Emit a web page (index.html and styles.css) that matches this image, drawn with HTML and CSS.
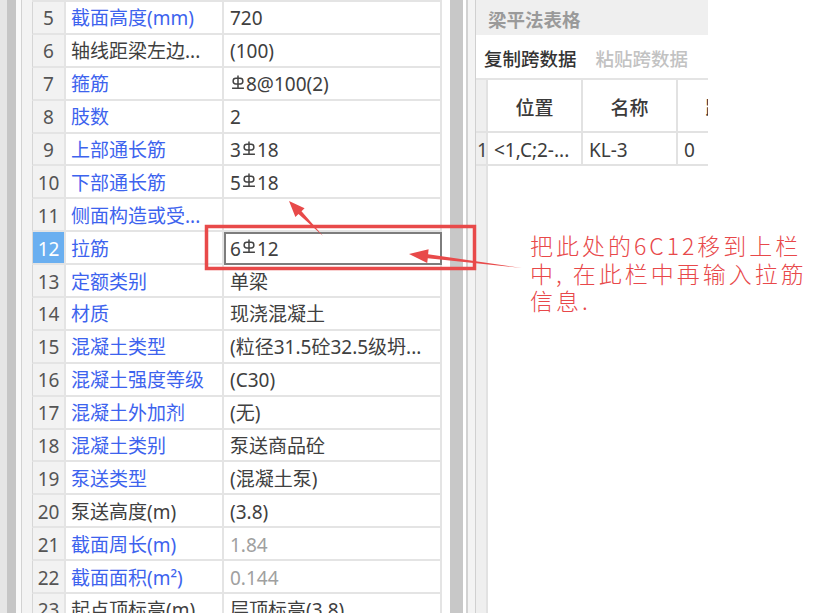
FILE: index.html
```html
<!DOCTYPE html>
<html lang="zh-CN">
<head>
<meta charset="utf-8">
<title>梁属性</title>
<link rel="stylesheet" href="styles.css">
</head>
<body>
<div class="screen">
  <div class="edge-left">
    <div class="e1"></div><div class="e2"></div><div class="e3"></div><div class="e4"></div><div class="e5"></div>
  </div>

  <div class="props">
    <div class="num">5</div><div class="name link">截面高度(mm)</div><div class="val">720</div>
    <div class="num">6</div><div class="name">轴线距梁左边...</div><div class="val">(100)</div>
    <div class="num">7</div><div class="name link">箍筋</div><div class="val"><svg class="rebar" viewBox="0 0 13 13"><path d="M6.5 0.5V12M1 12.2H12"/><rect x="2" y="3" width="9" height="5.4" rx="2.5"/></svg>8@100(2)</div>
    <div class="num">8</div><div class="name link">肢数</div><div class="val">2</div>
    <div class="num">9</div><div class="name link">上部通长筋</div><div class="val">3<svg class="rebar" viewBox="0 0 13 13"><path d="M6.5 0.5V12M1 12.2H12"/><rect x="2" y="3" width="9" height="5.4" rx="2.5"/></svg>18</div>
    <div class="num">10</div><div class="name link">下部通长筋</div><div class="val">5<svg class="rebar" viewBox="0 0 13 13"><path d="M6.5 0.5V12M1 12.2H12"/><rect x="2" y="3" width="9" height="5.4" rx="2.5"/></svg>18</div>
    <div class="num">11</div><div class="name link">侧面构造或受...</div><div class="val"></div>
    <div class="num sel">12</div><div class="name link">拉筋</div><div class="val edit">6<svg class="rebar" viewBox="0 0 13 13"><path d="M6.5 0.5V12M1 12.2H12"/><rect x="2" y="3" width="9" height="5.4" rx="2.5"/></svg>12</div>
    <div class="num">13</div><div class="name link">定额类别</div><div class="val">单梁</div>
    <div class="num">14</div><div class="name link">材质</div><div class="val">现浇混凝土</div>
    <div class="num">15</div><div class="name link">混凝土类型</div><div class="val">(粒径31.5砼32.5级坍...</div>
    <div class="num">16</div><div class="name link">混凝土强度等级</div><div class="val">(C30)</div>
    <div class="num">17</div><div class="name link">混凝土外加剂</div><div class="val">(无)</div>
    <div class="num">18</div><div class="name link">混凝土类别</div><div class="val">泵送商品砼</div>
    <div class="num">19</div><div class="name link">泵送类型</div><div class="val">(混凝土泵)</div>
    <div class="num">20</div><div class="name">泵送高度(m)</div><div class="val">(3.8)</div>
    <div class="num">21</div><div class="name link">截面周长(m)</div><div class="val muted">1.84</div>
    <div class="num">22</div><div class="name link">截面面积(m²)</div><div class="val muted">0.144</div>
    <div class="num">23</div><div class="name">起点顶标高(m)</div><div class="val">层顶标高(3.8)</div>
  </div>

  <div class="gap-a"></div>
  <div class="scrollbar"></div>
  <div class="gap-b"></div>
  <div class="divider"></div>
  <div class="gap-c"></div>

  <div class="panel">
    <div class="panel-title">梁平法表格</div>
    <div class="toolbar">
      <span class="tool">复制跨数据</span>
      <span class="tool disabled">粘贴跨数据</span>
    </div>
    <div class="grid">
      <div class="rh head"></div><div class="gh">位置</div><div class="gh">名称</div><div class="gh">跨长</div>
      <div class="rh">1</div><div class="gc">&lt;1,C;2-...</div><div class="gc">KL-3</div><div class="gc">0</div>
      <div class="rh fill"></div><div class="blank"></div>
    </div>
  </div>

  <div class="rest"></div>
</div>

<svg class="annot" viewBox="0 0 815 613" width="815" height="613">
  <rect x="206.5" y="226.5" width="268" height="42" class="mark"/>
  <polygon class="arrow" points="323,236 301.5,211.2 304.6,208.3 289,201 295.4,216.9 298.5,214"/>
  <polygon class="arrow" points="522,268 428.1,254.3 428.6,249.3 409,254 427.2,262.9 427.8,258.3"/>
</svg>

<div class="note">
  <span class="note-line">把此处的6C12移到上栏</span>
  <span class="note-line">中, 在此栏中再输入拉筋</span>
  <span class="note-line">信息.</span>
</div>
</body>
</html>
```

FILE: styles.css
```css
* { box-sizing: border-box; }

html, body {
  margin: 0;
  padding: 0;
  width: 815px;
  height: 613px;
  overflow: hidden;
  background: #fff;
}

body {
  position: relative;
  font-family: "Noto Sans", "Noto Sans CJK SC", sans-serif;
  font-size: 19px;
  color: #3c3c3c;
}

.screen {
  display: flex;
  height: 613px;
  overflow: hidden;
}

.edge-left { display: flex; flex: none; height: 100%; }
.e1 { width: 7px; background: #e6e6e6; }
.e2 { width: 9px; background: #c6c6c6; }
.e3 { width: 5px; background: #fafafa; }
.e4 { width: 1px; background: #d2d2d2; }
.e5 { width: 10px; background: #f3f3f3; }

.props {
  flex: none;
  width: 410px;
  display: grid;
  grid-template-columns: 34px 158px 218px;
  grid-auto-rows: 32.9px;
  align-content: start;
  border-top: 2px solid #e4e4e4;
  background: #fff;
}

.props > div {
  display: flex;
  align-items: center;
  padding-top: 3px;
  border-bottom: 2px solid #e4e4e4;
  border-right: 2px solid #e4e4e4;
  white-space: nowrap;
  overflow: hidden;
  line-height: 1;
}

.num {
  justify-content: center;
  background: #f2f2f2;
  color: #555;
  border-left: 1px solid #d6d6d6;
}
.num.sel {
  background: #6aaff0;
  color: #fff;
}

.name {
  padding-left: 5px;
  color: #404040;
}
.name.link { color: #3d63ee; }

.val {
  padding-left: 6px;
  color: #404040;
}
.val.muted { color: #a0a0a0; }
.val.edit {
  outline: 2px solid #7d7d7d;
  outline-offset: -2px;
}

.rebar {
  width: 14px;
  height: 14px;
  margin: 0 1px;
  position: relative;
  top: -3px;
  fill: none;
  stroke: #444;
  stroke-width: 1.4;
}

.gap-a { flex: none; width: 8px; background: #fff; }
.scrollbar { flex: none; width: 13px; background: #c8c8c8; }
.gap-b { flex: none; width: 3px; background: #fff; }
.divider { flex: none; width: 2px; background: #d2d2d2; }
.gap-c { flex: none; width: 7px; background: #f3f3f3; }

.panel {
  flex: none;
  width: 233px;
  display: flex;
  flex-direction: column;
  border-left: 1px solid #d0d0d0;
  overflow: hidden;
}

.panel-title {
  flex: none;
  height: 35px;
  display: flex;
  align-items: center;
  padding-left: 12px;
  padding-top: 2px;
  background: #efefef;
  color: #9a9a9a;
  font-weight: 700;
  font-size: 18.5px;
}

.toolbar {
  flex: none;
  height: 45px;
  display: flex;
  align-items: center;
  gap: 19px;
  padding-left: 8px;
  padding-top: 2px;
  border-bottom: 2px solid #e4e4e4;
  font-size: 18.5px;
}
.tool { color: #333; font-weight: 500; }
.tool.disabled { color: #c2c2c2; }

.grid {
  flex: 1;
  display: grid;
  grid-template-columns: 12px 95px 95px 95px;
  grid-template-rows: 53px 33px 1fr;
  width: 297px;
}

.grid > div {
  display: flex;
  align-items: center;
  white-space: nowrap;
  overflow: hidden;
  padding-top: 2px;
}

.rh {
  background: #efefef;
  border-right: 2px solid #e2e2e2;
  border-bottom: 2px solid #e2e2e2;
  padding-left: 1px;
  color: #444;
}
.rh.fill { border-bottom: none; }

.gh {
  justify-content: center;
  border-right: 2px solid #e2e2e2;
  border-bottom: 2px solid #e2e2e2;
  color: #3a3a3a;
  font-weight: 500;
}

.gc {
  padding-left: 6px;
  border-right: 2px solid #e2e2e2;
  border-bottom: 2px solid #e2e2e2;
  color: #3c3c3c;
}

.blank { grid-column: 2 / 5; background: #fff; }

.rest { flex: 1; background: #fff; }

.annot {
  position: absolute;
  left: 0;
  top: 0;
  pointer-events: none;
}
.mark {
  fill: none;
  stroke: #e84a4a;
  stroke-width: 3.5;
}
.arrow { fill: #e84a4a; }

.note {
  position: absolute;
  left: 530px;
  top: 234px;
  display: flex;
  flex-direction: column;
  font-family: "Noto Sans CJK SC", sans-serif;
  font-weight: 300;
  font-size: 23px;
  letter-spacing: 3px;
  color: #e8484a;
  white-space: nowrap;
}
.note-line {
  display: block;
  height: 27.5px;
  line-height: 23px;
}
```
